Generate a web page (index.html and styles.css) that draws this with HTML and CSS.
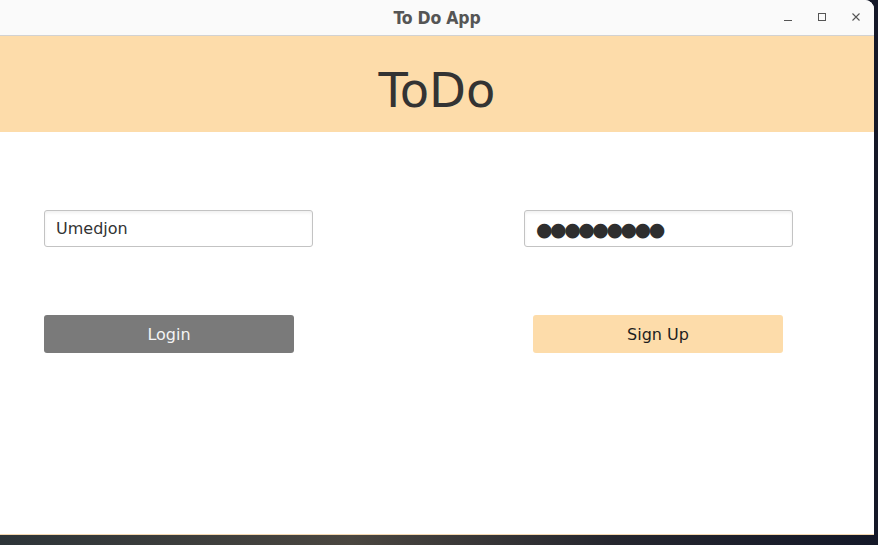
FILE: index.html
```html
<!DOCTYPE html>
<html>
<head>
<meta charset="utf-8">
<link rel="stylesheet" href="styles.css">
</head>
<body>
<div class="window">
  <div class="titlebar">
    <span class="title">To Do App</span>
    <div class="controls">
      <svg width="12" height="12" viewBox="0 0 12 12"><path d="M2 9.5h8" stroke="#555" stroke-width="1"/></svg>
      <svg width="12" height="12" viewBox="0 0 12 12"><rect x="2.5" y="2.5" width="7" height="7" fill="none" stroke="#555" stroke-width="1"/></svg>
      <svg width="12" height="12" viewBox="0 0 12 12"><path d="M2.5 2.5l7 7M9.5 2.5l-7 7" stroke="#555" stroke-width="1.1"/></svg>
    </div>
  </div>
  <div class="header">ToDo</div>
  <div class="content">
    <div class="row fields">
      <div class="input">Umedjon</div>
      <div class="input pass">●●●●●●●●●</div>
    </div>
    <div class="row buttons">
      <div class="btn login">Login</div>
      <div class="btn signup">Sign Up</div>
    </div>
  </div>
</div>
</body>
</html>
```
FILE: styles.css
```css
html, body {
  margin: 0;
  padding: 0;
}
body {
  width: 878px;
  height: 545px;
  overflow: hidden;
  background: linear-gradient(90deg, #2d3438 0%, #4a4640 40%, #25262e 70%, #141828 100%);
  font-family: "DejaVu Sans", sans-serif;
}
.window {
  width: 874px;
  height: 535px;
  background: #fff;
  border-top-right-radius: 9px;
  border-bottom: 1px solid #f3d7b0;
  box-sizing: border-box;
  display: flex;
  flex-direction: column;
  overflow: hidden;
}
.titlebar {
  height: 35px;
  background: #fafafa;
  border-bottom: 1px solid #d2d2d2;
  position: relative;
  display: flex;
  align-items: center;
  justify-content: center;
  flex-shrink: 0;
}
.title {
  font-family: "DejaVu Sans Condensed", "DejaVu Sans", sans-serif;
  font-weight: bold;
  font-size: 17.5px;
  color: #555;
  letter-spacing: -0.2px;
}
.controls {
  position: absolute;
  right: 12px;
  top: 11px;
  display: flex;
  gap: 22px;
}
.controls svg { display: block; }
.header {
  height: 96px;
  box-sizing: border-box;
  background: #fddcaa;
  color: #333;
  font-size: 48px;
  display: flex;
  align-items: center;
  justify-content: center;
  flex-shrink: 0;
  padding-top: 12px;
}
.content {
  padding: 78px 0 0 44px;
}
.row {
  display: flex;
}
.fields {
  gap: 211px;
}
.input {
  width: 269px;
  height: 37px;
  box-sizing: border-box;
  border: 1px solid #c3c3c3;
  border-radius: 3px;
  box-shadow: inset 0 2px 3px rgba(0,0,0,0.06);
  font-size: 16px;
  color: #333;
  padding-left: 11px;
  display: flex;
  align-items: center;
}
.pass {
  letter-spacing: -2.5px;
  font-size: 19px;
  color: #2e2e2e;
}
.buttons {
  margin-top: 68px;
  gap: 239px;
}
.btn {
  width: 250px;
  height: 38px;
  border-radius: 3px;
  display: flex;
  align-items: center;
  justify-content: center;
  font-size: 16px;
}
.login {
  background: #7a7a7a;
  color: #f4f4f4;
}
.signup {
  background: #fddcaa;
  color: #1e1e1e;
}
```
